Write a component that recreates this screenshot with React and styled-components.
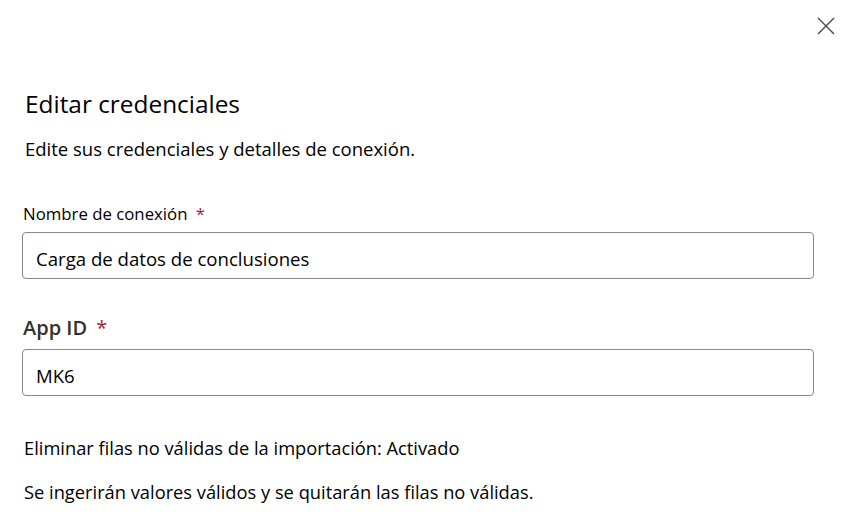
import React from 'react'
import styled, { createGlobalStyle } from 'styled-components'

const GlobalStyle = createGlobalStyle`
    html, body {
        margin: 0;
        padding: 0;
        background: #ffffff;
    }
    body {
        font-family: "Open Sans", "Noto Sans", Arial, sans-serif;
        color: #000000;
    }
`

function CloseIcon() {
    return (
        <svg width="18" height="18" viewBox="0 0 18 18" aria-hidden="true">
            <path d="M1 1 L17 17 M17 1 L1 17" stroke="#4a4a4a" strokeWidth="1.4" fill="none" />
        </svg>
    )
}

function App() {
    return (
        <>
            <GlobalStyle />
            <Panel>
                <Header>
                    <CloseButton aria-label="Cerrar">
                        <CloseIcon />
                    </CloseButton>
                </Header>
                <Title>Editar credenciales</Title>
                <Subtitle>Edite sus credenciales y detalles de conexión.</Subtitle>

                <Field>
                    <Label>
                        Nombre de conexión <Required>*</Required>
                    </Label>
                    <Input defaultValue="Carga de datos de conclusiones" />
                </Field>

                <Field $top={35}>
                    <Label $big>
                        App ID <Required>*</Required>
                    </Label>
                    <Input defaultValue="MK6" />
                </Field>

                <Note $top={40}>Eliminar filas no válidas de la importación: Activado</Note>
                <Note $top={20}>Se ingerirán valores válidos y se quitarán las filas no válidas.</Note>
            </Panel>
        </>
    )
}

const Panel = styled.div`
    display: flex;
    flex-direction: column;
    width: 851px;
    height: 530px;
    box-sizing: border-box;
    padding: 0 37px 0 22px;
    overflow: hidden;
`

const Header = styled.div`
    display: flex;
    justify-content: flex-end;
    padding-top: 17px;
    margin-right: -21px;
`

const CloseButton = styled.button`
    display: flex;
    padding: 0;
    border: none;
    background: transparent;
    cursor: pointer;
`

const Title = styled.h1`
    margin: 53px 0 0 3px;
    font-size: 24.4px;
    line-height: 32px;
    font-weight: 400;
    color: #000;
`

const Subtitle = styled.p`
    margin: 17px 0 0 3px;
    font-size: 18.5px;
    line-height: 24px;
    color: #000;
`

const Field = styled.div`
    display: flex;
    flex-direction: column;
    gap: 7px;
    margin-top: ${({ $top }) => $top ?? 42}px;
`

const Label = styled.label`
    margin-left: 1px;
    font-size: ${({ $big }) => ($big ? '20px' : '16.8px')};
    line-height: ${({ $big }) => ($big ? '28px' : '22px')};
    font-weight: ${({ $big }) => ($big ? 600 : 400)};
    color: ${({ $big }) => ($big ? '#323130' : '#000')};
`

const Required = styled.span`
    color: #a4262c;
    margin-left: 4px;
    font-weight: 400;
`

const Input = styled.input`
    box-sizing: border-box;
    width: 100%;
    height: 47px;
    padding: 5px 13px 0;
    border: 1px solid #8a8886;
    border-radius: 4px;
    font-family: inherit;
    font-size: 18.6px;
    color: #000;
    outline: none;
`

const Note = styled.p`
    margin: ${({ $top }) => $top}px 0 0 2px;
    font-size: 18.3px;
    line-height: 24px;
    color: #000;
`

export default App
